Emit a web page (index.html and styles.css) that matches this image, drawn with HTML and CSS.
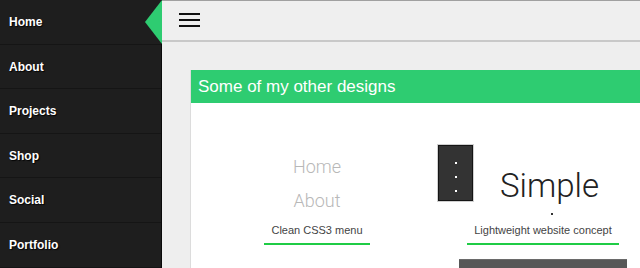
FILE: index.html
```html
<!DOCTYPE html>
<html lang="en">
<head>
<meta charset="utf-8">
<title>Designs</title>
<link rel="stylesheet" href="styles.css">
</head>
<body>
<nav class="sidebar">
  <a class="nav-item active" href="#">Home</a>
  <a class="nav-item" href="#">About</a>
  <a class="nav-item" href="#">Projects</a>
  <a class="nav-item" href="#">Shop</a>
  <a class="nav-item" href="#">Social</a>
  <a class="nav-item" href="#">Portfolio</a>
</nav>
<div class="main">
  <header class="topbar">
    <div class="burger"><span></span><span></span><span></span></div>
  </header>
  <section class="content">
    <div class="card">
      <div class="card-head">Some of my other designs</div>
      <div class="card-body">
        <div class="col">
          <div class="shot shot-menu">
            <div class="mini-link">Home</div>
            <div class="mini-link">About</div>
          </div>
          <div class="caption">Clean CSS3 menu</div>
          <div class="shot-next shot-blank"></div>
        </div>
        <div class="col">
          <div class="shot shot-simple">
            <div class="mini-nav"><i></i><i></i><i></i></div>
            <div class="simple-wrap">
              <div class="simple-title">Simple</div>
              <div class="simple-dot"></div>
            </div>
          </div>
          <div class="caption">Lightweight website concept</div>
          <div class="shot-next shot-dark"></div>
        </div>
      </div>
    </div>
  </section>
</div>
</body>
</html>
```
FILE: styles.css
```css
html, body {
  margin: 0;
  padding: 0;
}
body {
  display: flex;
  height: 268px;
  overflow: hidden;
  background: #eeeeee;
  font-family: "Liberation Sans", Arial, sans-serif;
}
.sidebar {
  width: 161px;
  flex: none;
  background: #1e1e1e;
  border-right: 1px solid #0a0a0a;
  display: flex;
  flex-direction: column;
}
.nav-item {
  position: relative;
  display: block;
  height: 43.6px;
  line-height: 44px;
  padding-left: 9px;
  border-bottom: 1px solid #151515;
  color: #ffffff;
  text-decoration: none;
  font-size: 12px;
  font-weight: bold;
  text-shadow: 1px 1px 1px rgba(0,0,0,0.9);
}
.nav-item.active::after {
  content: "";
  position: absolute;
  right: -1px;
  top: 0;
  width: 0;
  height: 0;
  border-top: 22px solid transparent;
  border-bottom: 22px solid transparent;
  border-right: 17px solid #2ecc71;
}
.main {
  flex: 1;
  min-width: 0;
  overflow: hidden;
  display: flex;
  flex-direction: column;
}
.topbar {
  height: 39px;
  flex: none;
  background: #efefef;
  border-top: 1px solid #a0a0a0;
  border-bottom: 2px solid #c8c8c8;
}
.burger {
  margin: 12px 0 0 17px;
  width: 21px;
  display: flex;
  flex-direction: column;
  gap: 4px;
}
.burger span {
  display: block;
  height: 2px;
  background: #111111;
}
.content {
  flex: 1;
  padding: 28px 0 0 29px;
  background: #eeeeee;
}
.card {
  width: 480px;
  height: 300px;
  background: #ffffff;
  box-shadow: -1px 0 0 #dcdcdc;
}
.card-head {
  height: 33px;
  line-height: 33px;
  padding-left: 7px;
  background: #2ecc71;
  color: #ffffff;
  font-size: 17px;
}
.card-body {
  display: flex;
  padding: 10px 0 0 13px;
}
.col {
  width: 226px;
  flex: none;
  display: flex;
  flex-direction: column;
  align-items: center;
}
.shot {
  width: 100%;
  height: 111px;
}
.shot-menu {
  padding-top: 37px;
  box-sizing: border-box;
  text-align: center;
}
.mini-link {
  font-family: Roboto, sans-serif;
  font-weight: 300;
  font-size: 18px;
  line-height: 34px;
  color: #b8b8b8;
}
.shot-simple {
  display: flex;
  align-items: flex-start;
}
.mini-nav {
  margin: 32px 0 0 8px;
  width: 35px;
  height: 56px;
  background: #333333;
  border: 1px solid #151515;
  box-shadow: 0 0 0 1px #d0d0d0;
  display: flex;
  flex-direction: column;
  align-items: center;
  padding-top: 16px;
  box-sizing: border-box;
  gap: 12px;
}
.mini-nav i {
  display: block;
  width: 2px;
  height: 2px;
  background: #ffffff;
}
.simple-wrap {
  margin: 54px 0 0 27px;
  display: flex;
  flex-direction: column;
  align-items: center;
}
.simple-title {
  font-family: Roboto, sans-serif;
  font-weight: 300;
  font-size: 33px;
  line-height: 38px;
  color: #222222;
}
.simple-dot {
  margin: 8px 0 0 4px;
  width: 2px;
  height: 2px;
  background: #333333;
}
.caption {
  padding: 0 7px 6px;
  line-height: 13px;
  font-size: 11px;
  color: #444444;
  border-bottom: 2px solid #1fcc45;
}
.shot-next {
  margin-top: 14px;
  width: 168px;
  height: 60px;
}
.shot-blank {
  background: #ffffff;
}
.shot-dark {
  background: #575757;
  border-top: 1px solid #6a6a6a;
}
```
